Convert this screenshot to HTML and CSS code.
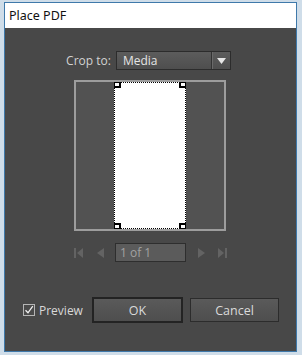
FILE: index.html
```html
<!DOCTYPE html>
<html lang="en">
<head>
  <meta charset="UTF-8">
  <title>Place PDF</title>
  <link rel="stylesheet" href="styles.css">
</head>
<body>
  <div class="window">
    <div class="titlebar">Place PDF</div>
    <div class="content">
      <div class="crop-row">
        <span class="label">Crop to:</span>
        <div class="select">
          <span class="select-value">Media</span>
          <span class="select-arrow">
            <svg width="9" height="6" viewBox="0 0 9 6"><path d="M0 0H9L4.5 6Z" fill="#e6e6e6"/></svg>
          </span>
        </div>
      </div>

      <div class="preview-frame">
        <div class="page">
          <span class="handle tl"></span>
          <span class="handle tr"></span>
          <span class="handle bl"></span>
          <span class="handle br"></span>
        </div>
      </div>

      <div class="pager">
        <svg class="nav first" width="9" height="10" viewBox="0 0 9 10"><rect x="0" y="0" width="2" height="10"/><path d="M9 0V10L3 5Z"/></svg>
        <svg class="nav prev" width="7" height="10" viewBox="0 0 7 10"><path d="M7 0V10L0 5Z"/></svg>
        <div class="page-box">1 of 1</div>
        <svg class="nav next" width="7" height="10" viewBox="0 0 7 10"><path d="M0 0V10L7 5Z"/></svg>
        <svg class="nav last" width="9" height="10" viewBox="0 0 9 10"><path d="M0 0V10L6 5Z"/><rect x="7" y="0" width="2" height="10"/></svg>
      </div>

      <div class="actions">
        <label class="check">
          <svg width="12" height="12" viewBox="0 0 12 12">
            <rect x="0.5" y="0.5" width="11" height="11" fill="#4a4a4a" stroke="#b5b5b5"/>
            <path d="M2.5 6.2L5 8.8L9.8 2.2" fill="none" stroke="#f0f0f0" stroke-width="1.3"/>
          </svg>
          <span>Preview</span>
        </label>
        <button class="btn primary">OK</button>
        <button class="btn">Cancel</button>
      </div>
    </div>
  </div>
</body>
</html>
```

FILE: styles.css
```css
html, body {
  margin: 0;
  padding: 0;
}
body {
  background-color: #cfdde9;
  font-family: "Open Sans", "Noto Sans", sans-serif;
  padding-top: 2px;
}
.window {
  margin-left: 4px;
  width: 291px;
  border: 1px solid #3f79aa;
}
.titlebar {
  background-color: #ffffff;
  height: 25px;
  line-height: 25px;
  padding-left: 4px;
  font-family: "Noto Sans", sans-serif;
  font-size: 12.5px;
  color: #111;
}
.content {
  background-color: #484848;
  height: 323px;
  padding-top: 23px;
  box-sizing: border-box;
}
.crop-row {
  display: flex;
  align-items: center;
  justify-content: center;
  gap: 5px;
  padding-right: 4px;
}
.label {
  color: #d2d2d2;
  font-size: 12px;
}
.select {
  display: flex;
  width: 115px;
  height: 19px;
  box-sizing: border-box;
  border: 1px solid #2c2c2c;
  background: linear-gradient(#5c5c5c, #4e4e4e);
}
.select-value {
  flex: 1;
  color: #e4e4e4;
  font-size: 12px;
  line-height: 17px;
  padding-left: 6px;
}
.select-arrow {
  width: 17px;
  border-left: 1px solid #6a6a6a;
  box-shadow: -1px 0 0 #333;
  display: flex;
  align-items: center;
  justify-content: center;
}
.preview-frame {
  width: 148px;
  height: 147px;
  margin: 10px auto 0;
  border: 2px solid #9d9d9d;
  background-color: #525252;
  display: flex;
  justify-content: center;
  position: relative;
  left: -1px;
}
.page {
  width: 70px;
  height: 145px;
  background-color: #ffffff;
  border: 1px dotted #000;
  position: relative;
}
.handle {
  position: absolute;
  width: 4px;
  height: 3px;
  border: 2px solid #000;
  background-color: #fff;
}
.tl { top: -1px; left: -1px; border-left-width: 1px; border-top-width: 1px; }
.tr { top: -1px; right: -1px; border-right-width: 1px; border-top-width: 1px; }
.bl { bottom: -1px; left: -1px; border-left-width: 1px; border-bottom-width: 1px; }
.br { bottom: -1px; right: -1px; border-right-width: 1px; border-bottom-width: 1px; }
.pager {
  display: flex;
  align-items: center;
  margin-top: 12px;
  padding-left: 69px;
  height: 19px;
}
.nav {
  fill: #636363;
}
.first { margin-right: 14px; }
.prev { margin-right: 11px; }
.next { margin-left: 12px; margin-right: 13px; }
.page-box {
  width: 71px;
  height: 19px;
  box-sizing: border-box;
  border: 1px solid #2e2e2e;
  background-color: #5b5b5b;
  color: #a2a2a2;
  font-size: 12px;
  line-height: 17px;
  padding-left: 4px;
}
.actions {
  display: flex;
  align-items: center;
  margin-top: 35px;
  padding-left: 18px;
}
.check {
  display: flex;
  align-items: center;
  gap: 4px;
  color: #d8d8d8;
  font-size: 12px;
  width: 69px;
}
.btn {
  font-family: "Open Sans", "Noto Sans", sans-serif;
  font-size: 12.5px;
  color: #dadada;
  width: 89px;
  height: 24px;
  border: 1px solid #2c2c2c;
  background: linear-gradient(#5a5a5a, #4e4e4e);
  padding: 0;
  margin-right: 7px;
}
.btn.primary {
  width: 91px;
  height: 26px;
  border: 2px solid #232323;
}
```
